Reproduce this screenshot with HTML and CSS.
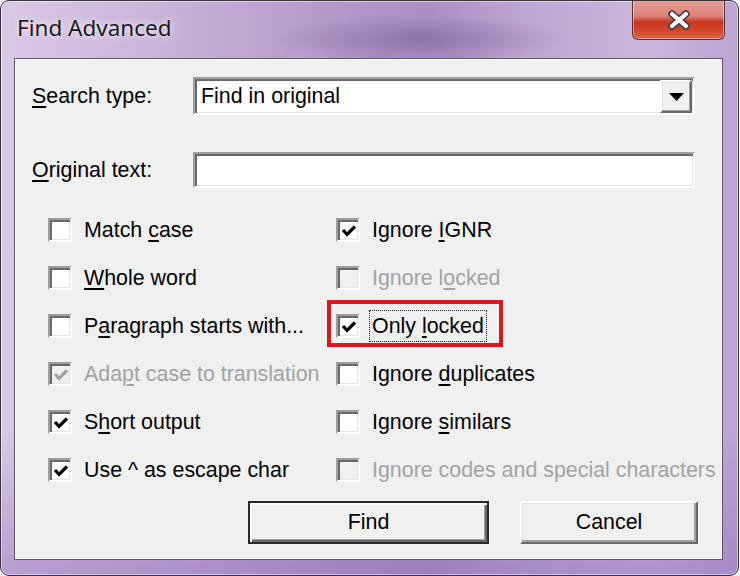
FILE: index.html
```html
<!DOCTYPE html>
<html lang="en">
<head>
    <meta charset="UTF-8">
    <title>Find Advanced</title>
    <link rel="stylesheet" href="styles.css">
</head>
<body>
    <div class="window">
        <div class="titlebar">
            <span class="title">Find Advanced</span>
            <button class="close" aria-label="Close">
                <svg width="28" height="20" viewBox="0 0 28 20">
                    <path d="M7 4 L21 16 M21 4 L7 16" stroke="#4a3d48" stroke-width="7.5" stroke-linecap="round"/>
                    <path d="M7 4 L21 16 M21 4 L7 16" stroke="#fff" stroke-width="4.2" stroke-linecap="round"/>
                </svg>
            </button>
        </div>
        <div class="client">
            <div class="field-row">
                <label class="field-label"><u>S</u>earch type:</label>
                <div class="combo">
                    <span class="combo-value">Find in original</span>
                    <span class="combo-btn">
                        <svg width="15" height="8" viewBox="0 0 15 8"><path d="M0 0 H15 L7.5 8 Z" fill="#000"/></svg>
                    </span>
                </div>
            </div>
            <div class="field-row second">
                <label class="field-label"><u>O</u>riginal text:</label>
                <div class="edit"></div>
            </div>

            <div class="options">
                <div class="check"><span class="box"></span><span class="text">Match <u>c</u>ase</span></div>
                <div class="check"><span class="box"></span><span class="text"><u>W</u>hole word</span></div>
                <div class="check"><span class="box"></span><span class="text">P<u>a</u>ragraph starts with...</span></div>
                <div class="check disabled"><span class="box"><svg class="tick" viewBox="0 0 16 14"><path d="M2 6 L6 10.5 L14 2.5"/></svg></span><span class="text">Ada<u>p</u>t case to translation</span></div>
                <div class="check"><span class="box"><svg class="tick" viewBox="0 0 16 14"><path d="M2 6 L6 10.5 L14 2.5"/></svg></span><span class="text">S<u>h</u>ort output</span></div>
                <div class="check"><span class="box"><svg class="tick" viewBox="0 0 16 14"><path d="M2 6 L6 10.5 L14 2.5"/></svg></span><span class="text">Use ^ as escape char</span></div>

                <div class="check"><span class="box"><svg class="tick" viewBox="0 0 16 14"><path d="M2 6 L6 10.5 L14 2.5"/></svg></span><span class="text">Ignore <u>I</u>GNR</span></div>
                <div class="check disabled"><span class="box"></span><span class="text">Ignore l<u>o</u>cked</span></div>
                <div class="check marked"><span class="box"><svg class="tick" viewBox="0 0 16 14"><path d="M2 6 L6 10.5 L14 2.5"/></svg></span><span class="text focus">Only <u>l</u>ocked</span></div>
                <div class="check"><span class="box"></span><span class="text">Ignore <u>d</u>uplicates</span></div>
                <div class="check"><span class="box"></span><span class="text">Ignore <u>s</u>imilars</span></div>
                <div class="check disabled"><span class="box"></span><span class="text">Ignore codes and special characters</span></div>
            </div>

            <div class="actions">
                <button class="btn default">Find</button>
                <button class="btn cancel">Cancel</button>
            </div>
        </div>
    </div>
</body>
</html>
```

FILE: styles.css
```css
*, *::before, *::after {
    box-sizing: border-box;
}
body {
    margin: 0;
    background: #fff;
    font-family: "Liberation Sans", Arial, sans-serif;
}
.window {
    width: 739px;
    height: 576px;
    border: 1px solid #3b3340;
    border-radius: 9px;
    display: flex;
    flex-direction: column;
    background:
        radial-gradient(ellipse 150px 24px at 420px 38px, rgba(110, 80, 135, 0.45), rgba(110, 80, 135, 0)),
        linear-gradient(180deg, rgba(150, 115, 185, 0) 75%, rgba(140, 105, 180, 0.45) 100%),
        linear-gradient(90deg, #dac8e5 0%, #cdb8dc 18%, #b89ecc 40%, #a98fc2 58%, #bfa7d3 72%, #cbb7dd 88%, #bba3d3 100%);
    box-shadow: inset 0 0 0 1px rgba(255, 255, 255, 0.5);
    overflow: hidden;
}
.titlebar {
    height: 57px;
    display: flex;
    align-items: flex-start;
    justify-content: space-between;
    padding: 0 13px 0 16px;
}
.title {
    font-family: "Noto Sans", sans-serif;
    font-size: 22.5px;
    line-height: 30px;
    margin-top: 12px;
    color: #1c1a20;
    text-shadow: 0 0 8px rgba(255, 255, 255, 0.8), 0 0 3px rgba(255, 255, 255, 0.6);
}
.close {
    width: 93px;
    height: 40px;
    margin-top: -1px;
    padding: 0;
    border: 1px solid #5a3434;
    border-top: none;
    border-radius: 0 0 6px 6px;
    background: linear-gradient(180deg, #e6a39a 0%, #dc8074 42%, #c8361f 56%, #d24a2d 82%, #dd6a4a 100%);
    box-shadow: inset 0 0 0 1px rgba(255, 255, 255, 0.4);
    display: flex;
    align-items: center;
    justify-content: center;
}
.client {
    height: 502px;
    margin: 0 15px 0 13px;
    background: #f0f0f0;
    border: 1px solid #5f566a;
    box-shadow: inset 0 0 0 1px #fff;
    padding: 18px 0 0 17px;
    font-size: 21.4px;
    color: #000;
}
u {
    text-decoration-thickness: 2px;
    text-underline-offset: 3px;
}
.field-row {
    display: flex;
    align-items: center;
}
.field-row.second {
    margin-top: 37px;
}
.field-label {
    width: 161px;
}
.combo, .edit {
    width: 502px;
    background: #fff;
    border: 2px solid;
    border-color: #a0a0a0 #fff #fff #a0a0a0;
    box-shadow: inset 2px 2px 0 #696969, inset -1px -1px 0 #e3e3e3;
}
.combo {
    height: 38px;
    display: flex;
    align-items: center;
    justify-content: space-between;
    padding: 1px 1px 0 6px;
}
.edit {
    height: 36px;
}
.combo-btn {
    width: 32px;
    height: 33px;
    background: #f0f0f0;
    border: 2px solid;
    border-color: #fff #696969 #696969 #fff;
    box-shadow: inset -1px -1px 0 #a0a0a0, inset 1px 1px 0 #e3e3e3;
    display: flex;
    align-items: center;
    justify-content: center;
}
.options {
    margin: 18px 0 0 16px;
    display: grid;
    grid-template-columns: 288px auto;
    grid-template-rows: repeat(6, 48px);
    grid-auto-flow: column;
}
.check {
    display: flex;
    align-items: center;
    gap: 12px;
    position: relative;
    white-space: nowrap;
}
.box {
    width: 24px;
    height: 24px;
    flex: none;
    background: #fff;
    border: 2px solid;
    border-color: #a0a0a0 #fff #fff #a0a0a0;
    box-shadow: inset 2px 2px 0 #696969, inset -1px -1px 0 #e3e3e3;
    display: flex;
    align-items: center;
    justify-content: center;
    padding: 1px 0 0 1px;
}
.tick {
    width: 16px;
    height: 14px;
    fill: none;
    stroke: #000;
    stroke-width: 3.2;
}
.check.disabled .box {
    background: #f0f0f0;
}
.check.disabled .tick {
    stroke: #a0a0a0;
}
.check.disabled .text {
    color: #a3a3a3;
}
.text {
    line-height: 26px;
}
.text.focus {
    outline: 1px dotted #222;
    outline-offset: 2px;
}
.check.marked::after {
    content: "";
    position: absolute;
    left: -9px;
    top: -2px;
    width: 176px;
    height: 47px;
    border: 4px solid #e3141c;
}
.actions {
    display: flex;
    gap: 31px;
    margin: 7px 0 0 216px;
}
.btn {
    height: 43px;
    font-family: "Liberation Sans", Arial, sans-serif;
    font-size: 21.4px;
    color: #000;
    background: #f0f0f0;
    border: 2px solid;
    border-color: #fff #696969 #696969 #fff;
    box-shadow: inset -2px -2px 0 #a0a0a0, inset 1px 1px 0 #e3e3e3;
    padding: 0;
}
.btn.default {
    width: 241px;
    border-color: #2a2a2a;
    box-shadow: inset 2px 2px 0 #fff, inset -2px -2px 0 #696969, inset -3px -3px 0 #a0a0a0;
}
.btn.cancel {
    width: 178px;
}
```
